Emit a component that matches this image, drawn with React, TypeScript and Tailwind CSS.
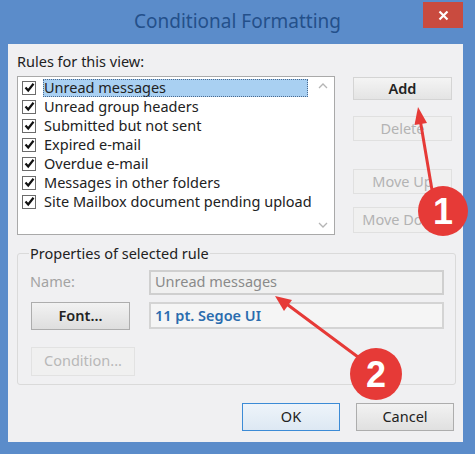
import React from 'react';

const rules = [
  'Unread messages',
  'Unread group headers',
  'Submitted but not sent',
  'Expired e-mail',
  'Overdue e-mail',
  'Messages in other folders',
  'Site Mailbox document pending upload',
];

const Check: React.FC = () => (
  <span className="w-[14px] h-[14px] border border-[#6b6b6b] bg-white flex items-center justify-center shrink-0">
    <svg width="11" height="11" viewBox="0 0 11 11">
      <path d="M1.5 5.5 L4.2 8.5 L9.5 1.8" fill="none" stroke="#111" strokeWidth="2.2" />
    </svg>
  </span>
);

const SideButton: React.FC<{ label: string; enabled?: boolean; className?: string }> = ({ label, enabled, className }) => (
  <div
    className={`w-[99px] flex items-center justify-center border text-[14.5px] whitespace-nowrap overflow-hidden ${
      enabled
        ? 'border-[#d4d4d4] bg-gradient-to-b from-[#f4f4f4] to-[#e4e4e4] text-[#222] font-semibold'
        : 'border-[#e0e0e0] bg-[#f0f0f0] text-[#b3b3b3]'
    } ${className ?? ''}`}
  >
    {label}
  </div>
);

export default function App() {
  return (
    <div className="relative w-[475px] h-[454px] bg-[#5b8cca] flex flex-col font-['Noto_Sans',sans-serif] overflow-hidden">
      {/* title bar */}
      <div className="relative h-[44px] shrink-0 flex items-center justify-center">
        <span className="text-[19px] text-[#24508a] pb-[2px]">Conditional Formatting</span>
        <div className="absolute right-[12px] top-[2px] w-[40px] h-[26px] bg-[#c94b3f] flex items-center justify-center">
          <svg width="11" height="11" viewBox="0 0 11 11">
            <path d="M1.5 1.5 L9.5 9.5 M9.5 1.5 L1.5 9.5" stroke="#fff" strokeWidth="2.2" />
          </svg>
        </div>
      </div>

      {/* client area */}
      <div className="ml-[8px] mr-[12px] h-[398px] bg-[#f0f0f2] flex flex-col pl-[9px] text-[#222]">
        <div className="text-[14.5px] leading-[18px] mt-[8px]">Rules for this view:</div>

        <div className="flex mt-[6px]">
          {/* list */}
          <div className="w-[318px] h-[159px] border border-[#a9a9a9] bg-white flex">
            <div className="flex-1 min-w-0 pt-[1px] pl-[4px] overflow-hidden">
              {rules.map((r, i) => (
                <div key={r} className="h-[19px] flex items-center">
                  <Check />
                  <span
                    className={`ml-[7px] pl-[1px] h-[18px] flex items-center text-[14.5px] whitespace-nowrap ${
                      i === 0 ? 'w-[265px] shrink-0 bg-[#a9d0f2] outline outline-1 outline-dotted outline-[#4a6a90] -outline-offset-1' : ''
                    }`}
                  >
                    {r}
                  </span>
                </div>
              ))}
            </div>
            <div className="w-[23px] shrink-0 flex flex-col items-center justify-between py-[6px] bg-white">
              <svg width="10" height="6" viewBox="0 0 10 6">
                <path d="M1 5 L5 1 L9 5" fill="none" stroke="#b5b5b5" strokeWidth="1.3" />
              </svg>
              <svg width="10" height="6" viewBox="0 0 10 6">
                <path d="M1 1 L5 5 L9 1" fill="none" stroke="#b5b5b5" strokeWidth="1.3" />
              </svg>
            </div>
          </div>

          {/* side buttons */}
          <div className="ml-[18px] flex flex-col">
            <SideButton label="Add" enabled className="h-[23px] mt-[1px]" />
            <SideButton label="Delete" className="h-[25px] mt-[16px]" />
            <SideButton label="Move Up" className="h-[25px] mt-[28px]" />
            <SideButton label="Move Down" className="h-[26px] mt-[13px]" />
          </div>
        </div>

        {/* group box */}
        <fieldset className="mt-[8px] w-[438px] h-[142px] border border-[#dadada] rounded-[3px] pl-[12px] pr-[11px]">
          <legend className="text-[14.5px] px-[1px] -ml-[1px]">Properties of selected rule</legend>
          <div className="flex items-center mt-[5px]">
            <span className="w-[119px] text-[14.5px] text-[#a3a3a3]">Name:</span>
            <div className="w-[295px] h-[25px] border-2 border-[#cfcfcf] bg-[#f0f0f0] flex items-center px-[4px] text-[14.5px] text-[#8a8a8a]">
              Unread messages
            </div>
          </div>
          <div className="flex items-center mt-[7px]">
            <div className="ml-[1px] w-[99px] h-[28px] border border-[#adadad] bg-gradient-to-b from-[#f2f2f2] to-[#dedede] flex items-center justify-center text-[14.5px] font-semibold">
              Font...
            </div>
            <div className="ml-[19px] w-[295px] h-[27px] border-2 border-[#d4d4d4] bg-[#f5f5f5] flex items-center px-[4px] text-[14.5px] font-semibold text-[#2a6cae]">
              11 pt. Segoe UI
            </div>
          </div>
          <div className="ml-[1px] mt-[17px] w-[104px] h-[29px] border border-[#e2e2e2] bg-[#f0f0f0] flex items-center justify-center text-[14.5px] text-[#b8b8b8]">
            Condition...
          </div>
        </fieldset>

        {/* bottom buttons */}
        <div className="flex mt-[18px] ml-[225px]">
          <div className="w-[98px] h-[28px] border border-[#3c8bd6] bg-gradient-to-b from-[#eef4fa] to-[#dde8f3] flex items-center justify-center text-[14.5px]">
            OK
          </div>
          <div className="ml-[16px] w-[98px] h-[28px] border border-[#adadad] bg-gradient-to-b from-[#f2f2f2] to-[#e0e0e0] flex items-center justify-center text-[14.5px]">
            Cancel
          </div>
        </div>
      </div>

      {/* annotations */}
      <svg className="absolute inset-0 pointer-events-none" width="475" height="454" viewBox="0 0 475 454">
        <line x1="432" y1="190" x2="420.5" y2="122" stroke="#e63a37" strokeWidth="3" strokeLinecap="round" />
        <polygon points="418,107 427,123 414.5,125" fill="#e63a37" />
        <circle cx="443" cy="211" r="25" fill="#e63a37" />
        <text x="443" y="224" textAnchor="middle" fontSize="36" fontWeight="700" fill="#fff" fontFamily="Liberation Sans, sans-serif">1</text>

        <line x1="362" y1="360" x2="288" y2="305" stroke="#e63a37" strokeWidth="3" strokeLinecap="round" />
        <polygon points="275,296 292,300 284,311" fill="#e63a37" />
        <circle cx="376" cy="374" r="26" fill="#e63a37" />
        <text x="376" y="387" textAnchor="middle" fontSize="36" fontWeight="700" fill="#fff" fontFamily="Liberation Sans, sans-serif">2</text>
      </svg>
    </div>
  );
}
